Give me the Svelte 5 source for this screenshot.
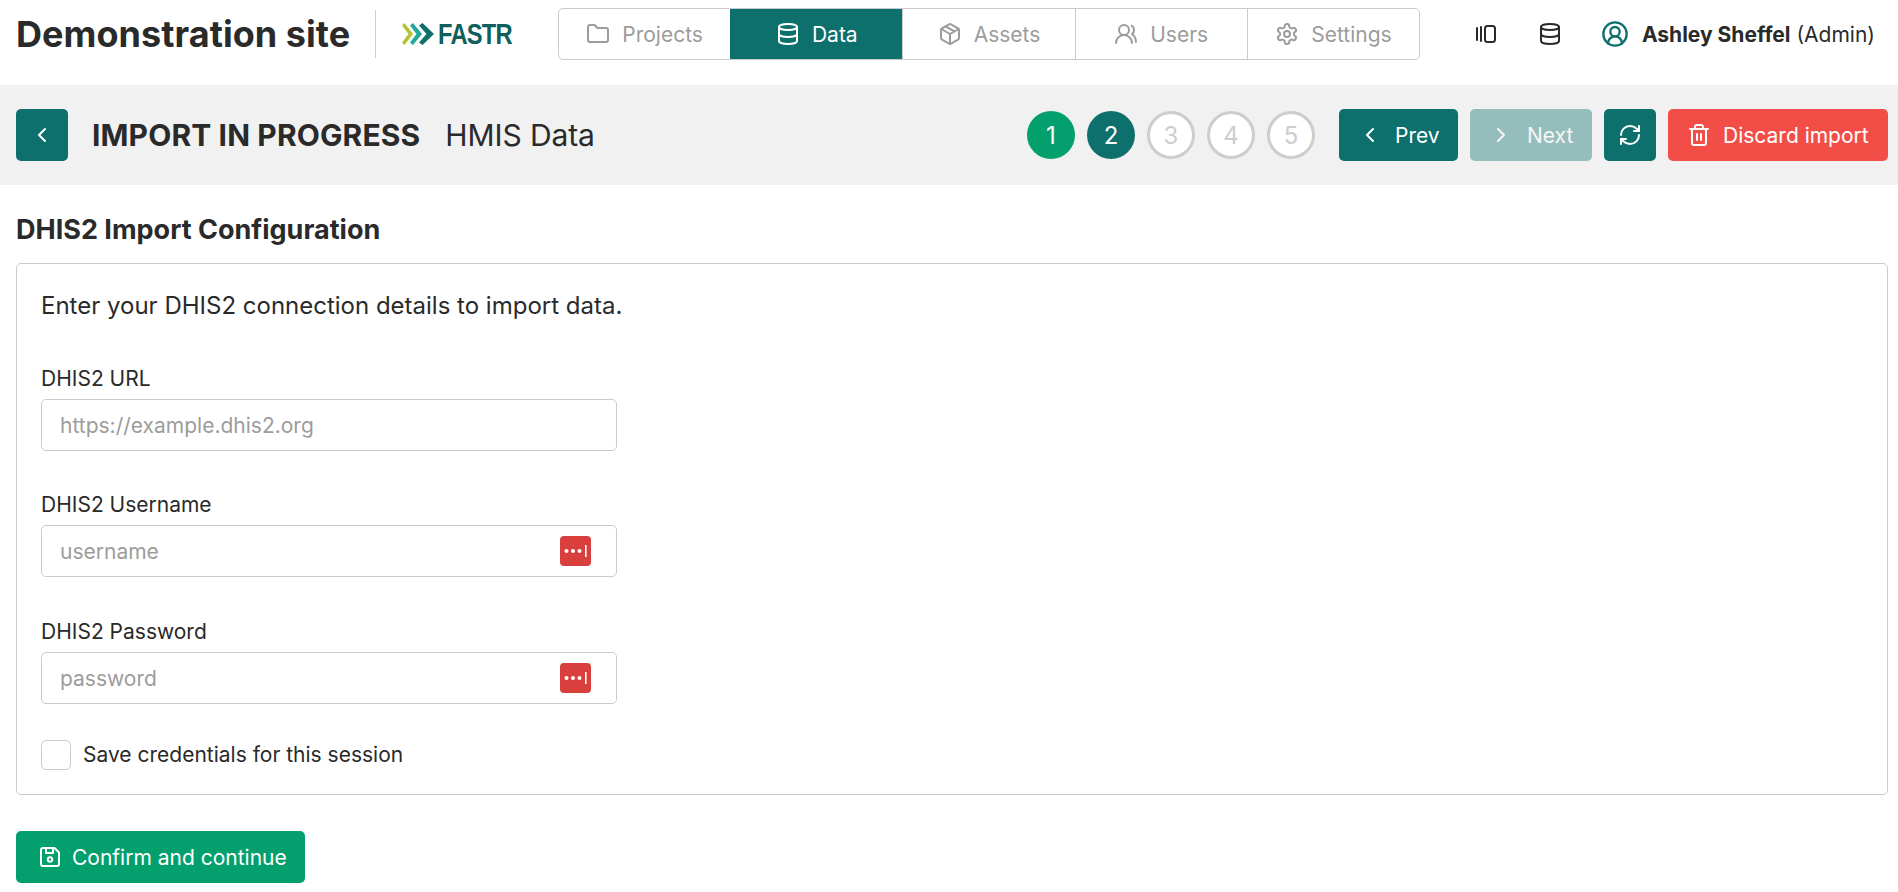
<script>
	const tabs = [
		{ label: 'Projects', icon: 'folder' },
		{ label: 'Data', icon: 'database', active: true },
		{ label: 'Assets', icon: 'package' },
		{ label: 'Users', icon: 'users' },
		{ label: 'Settings', icon: 'settings' }
	];
	const steps = [
		{ n: 1, state: 'done' },
		{ n: 2, state: 'current' },
		{ n: 3, state: 'todo' },
		{ n: 4, state: 'todo' },
		{ n: 5, state: 'todo' }
	];
</script>

{#snippet icon(name, size = 24)}
	<svg class="icon" width={size} height={size} viewBox="0 0 24 24" fill="none" stroke="currentColor" stroke-width="2" stroke-linecap="round" stroke-linejoin="round">
		{#if name === 'folder'}
			<path d="M20 20a2 2 0 0 0 2-2V8a2 2 0 0 0-2-2h-7.9a2 2 0 0 1-1.69-.9L9.6 3.9A2 2 0 0 0 7.93 3H4a2 2 0 0 0-2 2v13a2 2 0 0 0 2 2Z" />
		{:else if name === 'database'}
			<ellipse cx="12" cy="5" rx="9" ry="3" />
			<path d="M3 5V19A9 3 0 0 0 21 19V5" />
			<path d="M3 12A9 3 0 0 0 21 12" />
		{:else if name === 'package'}
			<path d="m7.5 4.27 9 5.15" />
			<path d="M21 8a2 2 0 0 0-1-1.73l-7-4a2 2 0 0 0-2 0l-7 4A2 2 0 0 0 3 8v8a2 2 0 0 0 1 1.73l7 4a2 2 0 0 0 2 0l7-4A2 2 0 0 0 21 16Z" />
			<path d="m3.3 7 8.7 5 8.7-5" />
			<path d="M12 22V12" />
		{:else if name === 'users'}
			<path d="M18 21a8 8 0 0 0-16 0" />
			<circle cx="10" cy="8" r="5" />
			<path d="M22 20c0-3.37-2-6.5-4-8a5 5 0 0 0-.45-8.3" />
		{:else if name === 'settings'}
			<path d="M12.22 2h-.44a2 2 0 0 0-2 2v.18a2 2 0 0 1-1 1.73l-.43.25a2 2 0 0 1-2 0l-.15-.08a2 2 0 0 0-2.73.73l-.22.38a2 2 0 0 0 .73 2.73l.15.1a2 2 0 0 1 1 1.72v.51a2 2 0 0 1-1 1.74l-.15.09a2 2 0 0 0-.73 2.73l.22.38a2 2 0 0 0 2.73.73l.15-.08a2 2 0 0 1 2 0l.43.25a2 2 0 0 1 1 1.73V20a2 2 0 0 0 2 2h.44a2 2 0 0 0 2-2v-.18a2 2 0 0 1 1-1.73l.43-.25a2 2 0 0 1 2 0l.15.08a2 2 0 0 0 2.73-.73l.22-.39a2 2 0 0 0-.73-2.73l-.15-.08a2 2 0 0 1-1-1.74v-.5a2 2 0 0 1 1-1.74l.15-.09a2 2 0 0 0 .73-2.73l-.22-.38a2 2 0 0 0-2.73-.73l-.15.08a2 2 0 0 1-2 0l-.43-.25a2 2 0 0 1-1-1.73V4a2 2 0 0 0-2-2z" />
			<circle cx="12" cy="12" r="3" />
		{:else if name === 'gallery'}
			<rect x="11" y="4" width="10" height="16" rx="2.5" />
			<path d="M7 5v14" />
			<path d="M3 6v12" />
		{:else if name === 'user'}
			<path d="M18 20a6 6 0 0 0-12 0" />
			<circle cx="12" cy="10" r="4" />
			<circle cx="12" cy="12" r="10" />
		{:else if name === 'left'}
			<path d="m15 18-6-6 6-6" />
		{:else if name === 'right'}
			<path d="m9 18 6-6-6-6" />
		{:else if name === 'refresh'}
			<path d="M3 12a9 9 0 0 1 9-9 9.75 9.75 0 0 1 6.74 2.74L21 8" />
			<path d="M21 3v5h-5" />
			<path d="M21 12a9 9 0 0 1-9 9 9.75 9.75 0 0 1-6.74-2.74L3 16" />
			<path d="M8 16H3v5" />
		{:else if name === 'trash'}
			<path d="M3 6h18" />
			<path d="M19 6v14c0 1-1 2-2 2H7c-1 0-2-1-2-2V6" />
			<path d="M8 6V4c0-1 1-2 2-2h4c1 0 2 1 2 2v2" />
			<path d="M10 11v6" />
			<path d="M14 11v6" />
		{:else if name === 'save'}
			<path d="M6 3h10.5L21 7.5V19a2 2 0 0 1-2 2H5a2 2 0 0 1-2-2V5a2 2 0 0 1 2-2z" />
			<circle cx="12" cy="14.5" r="2.2" />
			<path d="M15 3v5H8V3" />
		{/if}
	</svg>
{/snippet}

{#snippet keyBadge()}
	<span class="key-badge">
		<svg width="31" height="30" viewBox="0 0 31 30">
			<rect width="31" height="30" rx="4" fill="#d93f3c" />
			<circle cx="6.5" cy="15" r="2" fill="#fff" />
			<circle cx="13" cy="15" r="2" fill="#fff" />
			<circle cx="19.5" cy="15" r="2" fill="#fff" />
			<rect x="25" y="9" width="1.6" height="12" fill="#fff" />
		</svg>
	</span>
{/snippet}

<div class="page">
	<header class="topbar">
		<div class="site-name">Demonstration site</div>
		<div class="divider"></div>
		<div class="logo">
			<svg width="33" height="22" viewBox="0 0 33 22">
				<path d="M0 2.5 L2.5 0 L11 11 L2.5 22 L0 19.5 L6.5 11Z" fill="#b3c330" />
				<path d="M8 2.5 L11 0 L20 11 L11 22 L8 19.5 L14.5 11Z" fill="#21a99c" />
				<path d="M17 2.5 L20.5 0 L32 11 L20.5 22 L17 19.5 L24.5 11Z" fill="#0e7068" />
			</svg>
			<span>FASTR</span>
		</div>
		<nav class="tabs">
			{#each tabs as tab}
				<div class="tab" class:active={tab.active}>
					{@render icon(tab.icon)}
					<span>{tab.label}</span>
				</div>
			{/each}
		</nav>
		<div class="top-right">
			<span class="top-icon">{@render icon('gallery')}</span>
			<span class="top-icon db">{@render icon('database')}</span>
			<span class="user-icon">{@render icon('user', 28)}</span>
			<span class="user-name"><strong>Ashley Sheffel</strong> (Admin)</span>
		</div>
	</header>

	<section class="import-bar">
		<button class="btn teal square">{@render icon('left')}</button>
		<h1>IMPORT IN PROGRESS</h1>
		<span class="subtitle">HMIS Data</span>
		<div class="steps">
			{#each steps as step}
				<span class="step {step.state}">{step.n}</span>
			{/each}
		</div>
		<button class="btn teal prev">{@render icon('left')}<span>Prev</span></button>
		<button class="btn teal next">{@render icon('right')}<span>Next</span></button>
		<button class="btn teal square">{@render icon('refresh')}</button>
		<button class="btn red">{@render icon('trash')}<span>Discard import</span></button>
	</section>

	<main class="content">
		<h2>DHIS2 Import Configuration</h2>
		<div class="card">
			<p class="intro">Enter your DHIS2 connection details to import data.</p>
			<div class="fields">
				<label class="field">
					<span>DHIS2 URL</span>
					<span class="input-wrap"><input type="text" placeholder="https://example.dhis2.org" /></span>
				</label>
				<label class="field">
					<span>DHIS2 Username</span>
					<span class="input-wrap"><input type="text" placeholder="username" />{@render keyBadge()}</span>
				</label>
				<label class="field">
					<span>DHIS2 Password</span>
					<span class="input-wrap"><input type="password" placeholder="password" />{@render keyBadge()}</span>
				</label>
			</div>
			<label class="check">
				<input type="checkbox" />
				<span>Save credentials for this session</span>
			</label>
		</div>
		<button class="btn green">{@render icon('save')}<span>Confirm and continue</span></button>
	</main>
</div>

<style>
	:global(body) {
		margin: 0;
		background: #fff;
		overflow: hidden;
		font-family: Inter, "Liberation Sans", sans-serif;
		color: #2a2a2a;
	}

	.page {
		width: 1898px;
		height: 892px;
		font-size: 21px;
	}

	.icon {
		display: block;
		flex: none;
	}

	.topbar {
		display: flex;
		align-items: center;
		height: 85px;
		padding: 0 23px 17px 16px;
		box-sizing: border-box;
	}

	.site-name {
		font-size: 36px;
		font-weight: 700;
		width: 335px;
		white-space: nowrap;
		letter-spacing: 0.05px;
	}

	.divider {
		width: 1px;
		height: 48px;
		margin-left: 24px;
		background: #cfcfcf;
	}

	.logo {
		display: flex;
		align-items: center;
		gap: 3px;
		margin-left: 26px;
		width: 156px;
		color: #0f5f5c;
		font-family: "Liberation Sans", sans-serif;
		font-size: 30px;
		font-weight: 700;
		letter-spacing: -1px;
	}

	.logo span {
		transform: scaleX(0.79);
		transform-origin: left center;
	}

	.tabs {
		display: flex;
		height: 52px;
		width: 862px;
		box-sizing: border-box;
		border: 1px solid #cacaca;
		border-radius: 5px;
		overflow: hidden;
	}

	.tab {
		flex: 1;
		display: flex;
		align-items: center;
		justify-content: center;
		gap: 12px;
		color: #9c9c9c;
		border-left: 1px solid #cacaca;
	}

	.tab:first-child {
		border-left: 0;
	}

	.tab.active {
		background: #0e706c;
		color: #fff;
		border-color: #0e706c;
		margin: -1px 0;
	}

	.top-right {
		display: flex;
		align-items: center;
		margin-left: auto;
		white-space: nowrap;
	}

	.top-icon {
		color: #2a2a2a;
	}

	.db {
		margin-left: 40px;
	}

	.user-icon {
		color: #0e706c;
		margin-left: 39px;
	}

	.user-name {
		margin-left: 13px;
	}

	.user-name strong {
		font-weight: 700;
	}

	.import-bar {
		display: flex;
		align-items: center;
		height: 100px;
		padding: 0 10px 0 16px;
		box-sizing: border-box;
		background: #f1f1f1;
	}

	.import-bar h1 {
		margin: 0 0 0 24px;
		font-size: 30px;
		font-weight: 700;
		letter-spacing: 0.12px;
		white-space: nowrap;
	}

	.subtitle {
		margin-left: 25px;
		font-size: 30px;
		letter-spacing: -0.1px;
		white-space: nowrap;
	}

	.steps {
		display: flex;
		gap: 12px;
		margin-left: auto;
		margin-right: 24px;
	}

	.step {
		display: flex;
		align-items: center;
		justify-content: center;
		width: 48px;
		height: 48px;
		box-sizing: border-box;
		border-radius: 50%;
		font-size: 24px;
	}

	.step.done {
		background: #03a06e;
		color: #fff;
	}

	.step.current {
		background: #0e706c;
		color: #fff;
	}

	.step.todo {
		background: #fff;
		color: #cdcdcd;
		border: 3px solid #cdcdcd;
	}

	.btn {
		display: flex;
		align-items: center;
		height: 52px;
		padding: 0 19px;
		box-sizing: border-box;
		border: 0;
		border-radius: 5px;
		color: #fff;
		font: inherit;
		font-size: 21px;
		white-space: nowrap;
		gap: 12px;
	}

	.btn.square {
		width: 52px;
		padding: 0;
		justify-content: center;
	}

	.teal {
		background: #0e706c;
	}

	.prev {
		width: 119px;
		margin-right: 12px;
		gap: 13px;
	}

	.next {
		width: 122px;
		margin-right: 12px;
		gap: 14px;
		opacity: 0.4;
	}

	.red {
		width: 220px;
		margin-left: 12px;
		background: #f24e47;
	}

	.green {
		width: 289px;
		margin-top: 36px;
		padding-left: 22px;
		gap: 10px;
		background: #03a06e;
	}

	.content {
		padding: 0 10px 0 16px;
	}

	h2 {
		margin: 0;
		height: 78px;
		line-height: 90px;
		font-size: 27px;
		font-weight: 700;
	}

	.card {
		height: 532px;
		box-sizing: border-box;
		padding: 24px;
		border: 1px solid #cacaca;
		border-radius: 5px;
	}

	.intro {
		margin: 0 0 43px;
		font-size: 24px;
		line-height: 36px;
	}

	.fields {
		display: flex;
		flex-direction: column;
		gap: 42px;
		margin-bottom: 36px;
	}

	.field {
		display: flex;
		flex-direction: column;
		gap: 8px;
		line-height: 24px;
		width: 576px;
	}

	.field:last-child {
		margin-top: 1px;
	}

	.input-wrap {
		position: relative;
		display: block;
	}

	input[type='text'],
	input[type='password'] {
		display: block;
		width: 100%;
		height: 52px;
		box-sizing: border-box;
		padding: 0 18px;
		border: 1px solid #cacaca;
		border-radius: 5px;
		background: #fff;
		font: inherit;
		font-size: 21px;
		outline: none;
	}

	input::placeholder {
		color: #9c9c9c;
		opacity: 1;
	}

	.key-badge {
		position: absolute;
		right: 26px;
		top: 11px;
		line-height: 0;
	}

	.check {
		display: flex;
		align-items: center;
		gap: 12px;
		line-height: 30px;
	}

	.check input {
		appearance: none;
		width: 30px;
		height: 30px;
		margin: 0;
		box-sizing: border-box;
		border: 1px solid #cacaca;
		border-radius: 5px;
		background: #fff;
	}
</style>
